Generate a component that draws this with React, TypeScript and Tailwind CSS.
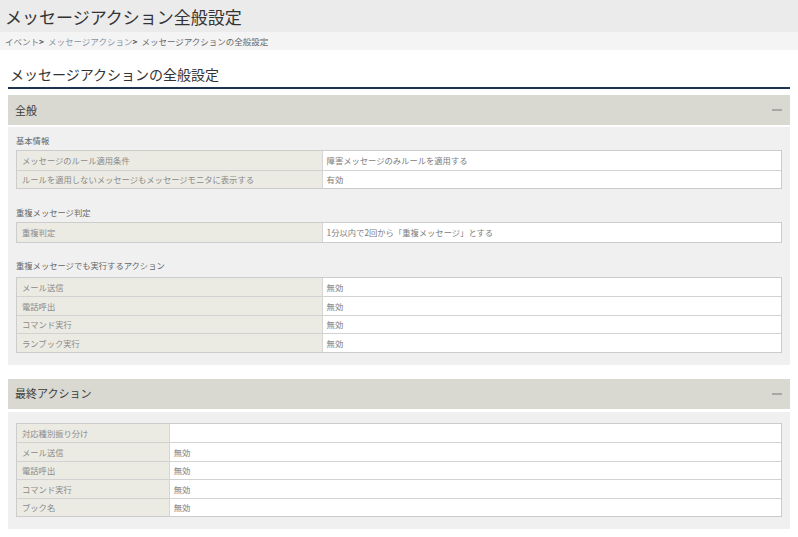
import React from 'react';

const font = { fontFamily: '"Noto Sans CJK JP", "Noto Sans", sans-serif' };

type Row = { label: string; value: string };

function SettingTable({ rows, labelWidth }: { rows: Row[]; labelWidth: string }) {
  return (
    <div className="border border-[#cccccc] bg-white">
      {rows.map((row, i) => (
        <div key={i} className={`flex h-[18.5px] ${i > 0 ? 'border-t border-[#d2d2d2]' : ''}`}>
          <div className={`${labelWidth} shrink-0 bg-[#ebebe4] border-r border-[#d6d6d6] px-[5px] flex items-center text-[8.3px] text-[#8a8a8a]`}>
            {row.label}
          </div>
          <div className="flex-1 px-[4px] flex items-center text-[8.3px] text-[#7c7c7c]">{row.value}</div>
        </div>
      ))}
    </div>
  );
}

function PanelHeader({ title }: { title: string }) {
  return (
    <div className="h-[30px] bg-[#d9d9d2] flex items-center justify-between pl-[7px] pr-[8px]">
      <span className="text-[11px] text-[#3c3c3c]">{title}</span>
      <span className="w-[10px] h-[2px] bg-[#a9a9a4]" />
    </div>
  );
}

function SubLabel({ text, className }: { text: string; className?: string }) {
  return <div className={`h-[14px] leading-[14px] text-[8.3px] text-[#666] ${className ?? ''}`}>{text}</div>;
}

export default function App() {
  return (
    <div className="w-[798px] h-[537px] bg-white overflow-hidden" style={font}>
      {/* Page title */}
      <div className="h-[32px] bg-[#ebebeb] flex items-center px-[5px]">
        <h1 className="text-[17px] text-[#333] leading-none">メッセージアクション全般設定</h1>
      </div>
      {/* Breadcrumb */}
      <div className="h-[18px] bg-[#f4f4f4] flex items-center px-[5px] text-[8.5px] text-[#777]">
        <span>イベント</span>
        <span className="font-bold text-[#555] mr-[4px]">&gt;</span>
        <span className="text-[#8a93a3]">メッセージアクション</span>
        <span className="font-bold text-[#555] mr-[4px]">&gt;</span>
        <span className="text-[#666]">メッセージアクションの全般設定</span>
      </div>

      <div className="px-[8px]">
        {/* Section title */}
        <div className="mt-[16px] pl-[2px] pb-[4px] border-b-2 border-[#1e3353]">
          <h2 className="text-[14px] text-[#333] leading-[17px]">メッセージアクションの全般設定</h2>
        </div>

        {/* General */}
        <div className="mt-[6px]">
          <PanelHeader title="全般" />
          <div className="mt-[2px] bg-[#f0f0f0] px-[8px] pt-[6px] pb-[12px]">
            <SubLabel text="基本情報" className="mb-[3px]" />
            <SettingTable
              labelWidth="w-[40%]"
              rows={[
                { label: 'メッセージのルール適用条件', value: '障害メッセージのみルールを適用する' },
                { label: 'ルールを適用しないメッセージもメッセージモニタに表示する', value: '有効' },
              ]}
            />
            <SubLabel text="重複メッセージ判定" className="mt-[16px] mb-[3px]" />
            <SettingTable
              labelWidth="w-[40%]"
              rows={[{ label: '重複判定', value: '1分以内で2回から「重複メッセージ」とする' }]}
            />
            <SubLabel text="重複メッセージでも実行するアクション" className="mt-[15px] mb-[5px]" />
            <SettingTable
              labelWidth="w-[40%]"
              rows={[
                { label: 'メール送信', value: '無効' },
                { label: '電話呼出', value: '無効' },
                { label: 'コマンド実行', value: '無効' },
                { label: 'ランブック実行', value: '無効' },
              ]}
            />
          </div>
        </div>

        {/* Final action */}
        <div className="mt-[14px]">
          <PanelHeader title="最終アクション" />
          <div className="mt-[3px] bg-[#f0f0f0] px-[8px] pt-[11px] pb-[12px]">
            <SettingTable
              labelWidth="w-[20%]"
              rows={[
                { label: '対応種別振り分け', value: '' },
                { label: 'メール送信', value: '無効' },
                { label: '電話呼出', value: '無効' },
                { label: 'コマンド実行', value: '無効' },
                { label: 'ブック名', value: '無効' },
              ]}
            />
          </div>
        </div>
      </div>
    </div>
  );
}
